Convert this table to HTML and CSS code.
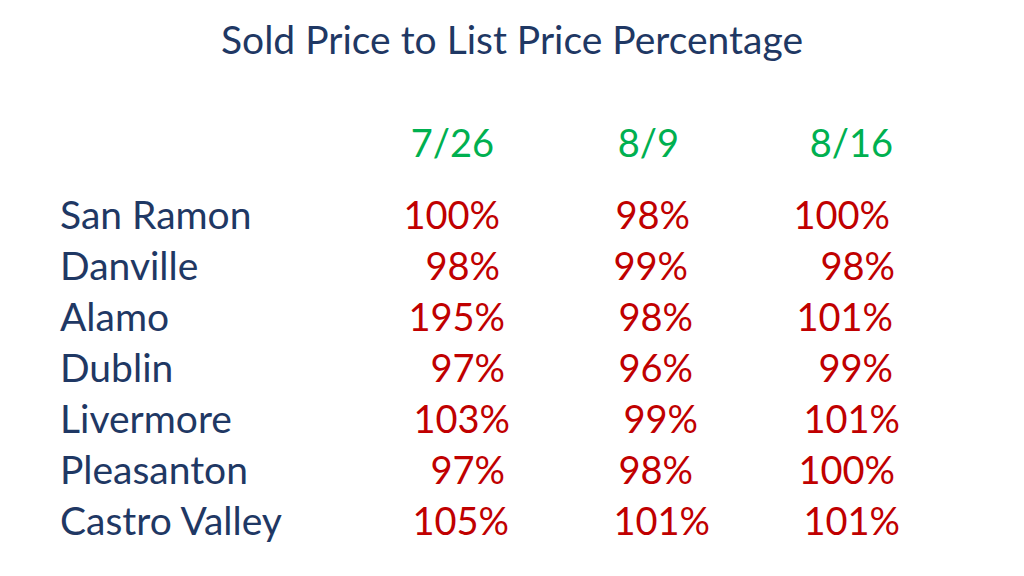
FILE: index.html
```html
<!DOCTYPE html>
<html>
<head>
<meta charset="utf-8">
<link rel="stylesheet" href="styles.css">
</head>
<body>
<div class="slide">
  <h1 class="title">Sold Price to List Price Percentage</h1>
  <div class="table">
    <div class="row head">
      <span class="label"></span>
      <span class="date c1">7/26</span>
      <span class="date c2">8/9</span>
      <span class="date c3">8/16</span>
    </div>
    <div class="row">
      <span class="label">San Ramon</span>
      <span class="val c1 l5">100%</span>
      <span class="val c2 l3">98%</span>
      <span class="val c3 l5">100%</span>
    </div>
    <div class="row">
      <span class="label">Danville</span>
      <span class="val c1 l5">98%</span>
      <span class="val c2 l5">99%</span>
      <span class="val c3">98%</span>
    </div>
    <div class="row">
      <span class="label">Alamo</span>
      <span class="val c1">195%</span>
      <span class="val c2">98%</span>
      <span class="val c3 l2">101%</span>
    </div>
    <div class="row">
      <span class="label">Dublin</span>
      <span class="val c1">97%</span>
      <span class="val c2">96%</span>
      <span class="val c3 l2">99%</span>
    </div>
    <div class="row">
      <span class="label">Livermore</span>
      <span class="val c1 r5">103%</span>
      <span class="val c2 r5">99%</span>
      <span class="val c3 r5">101%</span>
    </div>
    <div class="row">
      <span class="label">Pleasanton</span>
      <span class="val c1">97%</span>
      <span class="val c2">98%</span>
      <span class="val c3">100%</span>
    </div>
    <div class="row">
      <span class="label">Castro Valley</span>
      <span class="val c1 r4">105%</span>
      <span class="val c2 r17">101%</span>
      <span class="val c3 r5">101%</span>
    </div>
  </div>
</div>
</body>
</html>
```
FILE: styles.css
```css
html, body {
  margin: 0;
  padding: 0;
  background: #ffffff;
}
.slide {
  width: 1024px;
  height: 576px;
  font-family: Lato, "Open Sans", sans-serif;
  overflow: hidden;
}
.title {
  margin: 0;
  padding-top: 16px;
  height: 46px;
  line-height: 46px;
  font-size: 39px;
  font-weight: normal;
  color: #1f3864;
  text-align: center;
}
.table {
  padding-top: 55px;
  padding-left: 60px;
}
.row {
  display: grid;
  grid-template-columns: 310px 135px 188px 202px;
  height: 51px;
  line-height: 51px;
  font-size: 38px;
}
.row.head {
  height: 72px;
  line-height: 51px;
}
.label {
  color: #1f3864;
  font-size: 39px;
}
.val, .date {
  text-align: right;
}
.date {
  color: #00b050;
}
.date.c1 { padding-right: 11px; }
.date.c2 { padding-right: 14px; }
.date.c3 { padding-right: 2px; }
.val {
  color: #c00000;
}
.l2 { padding-right: 2px; }
.l3 { padding-right: 3px; }
.l5 { padding-right: 5px; }
.r4 { margin-right: -4px; }
.r5 { margin-right: -5px; }
.r17 { margin-right: -17px; }
```
